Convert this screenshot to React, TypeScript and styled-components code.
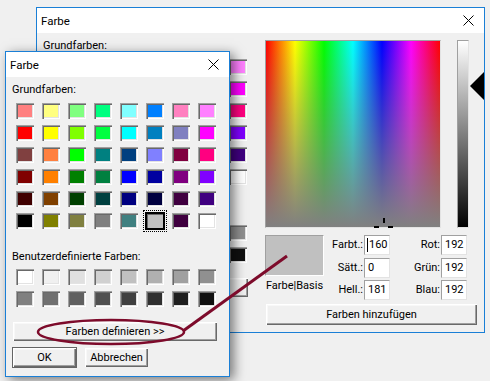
import React from "react"
import styled, { createGlobalStyle } from "styled-components"

const GlobalStyle = createGlobalStyle`
    html, body {
        margin: 0;
        padding: 0;
        background: #f0f0f0;
    }
    body {
        font-family: Roboto, "Liberation Sans", sans-serif;
        font-size: 11px;
        color: #000;
    }
`

const basicColors = [
    "#FF8080", "#FFFF80", "#80FF80", "#00FF80", "#80FFFF", "#0080FF", "#FF80C0", "#FF80FF",
    "#FF0000", "#FFFF00", "#80FF00", "#00FF40", "#00FFFF", "#0080C0", "#8080C0", "#FF00FF",
    "#804040", "#FF8040", "#00FF00", "#008080", "#004080", "#8080FF", "#800040", "#FF0080",
    "#800000", "#FF8000", "#008000", "#008040", "#0000FF", "#0000A0", "#800080", "#8000FF",
    "#400000", "#804000", "#004000", "#004040", "#000080", "#000040", "#400040", "#400080",
    "#000000", "#808000", "#808040", "#808080", "#408080", "#C0C0C0", "#400040", "#FFFFFF",
]
const customColors = [
    "#ffffff", "#f0f0f0", "#e0e0e0", "#d0d0d0", "#c0c0c0", "#b0b0b0", "#a0a0a0", "#909090",
    "#808080", "#707070", "#606060", "#505050", "#404040", "#303030", "#202020", "#101010",
]

const Desktop = styled.div`
    position: relative;
    width: 490px;
    height: 381px;
    overflow: hidden;
    background: #f0f0f0;
`
// dialogs sit on a free desktop, so they are placed by coordinates
const Window = styled.div<{ $left: number; $top: number; $width: number; $shadow?: boolean }>`
    position: absolute;
    left: ${p => p.$left}px;
    top: ${p => p.$top}px;
    width: ${p => p.$width}px;
    height: 326px;
    box-sizing: border-box;
    border: 1px solid #1a7fd6;
    background: #f0f0f0;
    display: flex;
    flex-direction: column;
    box-shadow: ${p => p.$shadow ? "4px 3px 11px rgba(0, 0, 0, 0.5)" : "none"};
`
const TitleBar = styled.div`
    height: 25px;
    flex: none;
    background: #fff;
    display: flex;
    align-items: center;
    justify-content: space-between;
    padding: 0 10px 0 4px;
`
const Title = styled.span`
    font-size: 11.5px;
`
const Body = styled.div`
    display: flex;
    flex-direction: row;
`
const LeftPanel = styled.div`
    width: 228px;
    flex: none;
    box-sizing: border-box;
    padding: 5px 0 0 6px;
    display: flex;
    flex-direction: column;
    align-items: flex-start;
`
const Label = styled.div<{ $gap?: number }>`
    height: 15px;
    line-height: 15px;
    margin-top: ${p => p.$gap ?? 0}px;
`
const SwatchGrid = styled.div<{ $gap: number }>`
    display: grid;
    grid-template-columns: repeat(8, 18px);
    grid-auto-rows: 16px;
    column-gap: 8px;
    row-gap: 6px;
    margin: ${p => p.$gap}px 0 0 4px;
`
const Swatch = styled.div<{ $color: string; $selected?: boolean }>`
    width: 18px;
    height: 16px;
    background: ${p => p.$color};
    box-shadow: ${p => p.$selected
        ? "0 0 0 1px #000, inset 0 0 0 1px #000, inset 2px 2px #696969"
        : "inset 1px 1px #a0a0a0, inset 2px 2px #696969, inset -1px -1px #fff, inset -2px -2px #e3e3e3"};
    outline: ${p => p.$selected ? "1px dotted #000" : "none"};
    outline-offset: 2px;
`
const Button = styled.div<{ $width: number; $height?: number; $default?: boolean; $disabled?: boolean }>`
    width: ${p => p.$width}px;
    height: ${p => p.$height ?? 21}px;
    box-sizing: border-box;
    display: flex;
    align-items: center;
    justify-content: center;
    background: #f0f0f0;
    color: ${p => p.$disabled ? "#a0a0a0" : "#000"};
    border: 1px solid ${p => p.$default ? "#646464" : "transparent"};
    box-shadow: inset 1px 1px #fff, inset -1px -1px #696969, inset -2px -2px #a0a0a0, inset 2px 2px #f8f8f8;
`
const WideButton = styled(Button)`
    margin-top: 14px;
`
const ButtonRow = styled.div`
    display: flex;
    gap: 7px;
    margin-top: 5px;
`
const RightPanel = styled.div`
    display: flex;
    flex-direction: column;
    padding-top: 7px;
`
const SpectrumRow = styled.div`
    display: flex;
    align-items: flex-start;
`
const Spectrum = styled.div`
    position: relative;
    width: 176px;
    height: 188px;
    box-sizing: border-box;
    border: 1px solid;
    border-color: #a0a0a0 #e3e3e3 #e3e3e3 #a0a0a0;
    background:
        linear-gradient(to bottom, rgba(128, 128, 128, 0), #808080),
        linear-gradient(to right, #f00, #ff0, #0f0, #0ff, #00f, #f0f, #f00);
`
const Crosshair = styled.svg`
    position: absolute;
    left: 108px;
    top: 176px;
`
const LumBar = styled.div`
    width: 12px;
    height: 188px;
    margin-left: 16px;
    box-sizing: border-box;
    border: 1px solid;
    border-color: #a0a0a0 #e3e3e3 #e3e3e3 #a0a0a0;
    background: linear-gradient(to bottom, #fff, #000);
`
const Pointer = styled.div`
    width: 14px;
    height: 28px;
    margin: 32px 0 0 1px;
    background: #000;
    clip-path: polygon(0 50%, 100% 0, 100% 100%);
`
const DetailRow = styled.div`
    display: flex;
    margin-top: 7px;
    height: 65px;
`
const PreviewCol = styled.div`
    width: 59px;
    display: flex;
    flex-direction: column;
    align-items: center;
`
const PreviewBox = styled.div<{ $color: string }>`
    width: 59px;
    height: 41px;
    box-sizing: border-box;
    background: ${p => p.$color};
    border: 1px solid;
    border-color: #a0a0a0 #fff #fff #a0a0a0;
`
const Caption = styled.div`
    margin-top: 2px;
    line-height: 15px;
`
const FieldGrid = styled.div`
    display: grid;
    grid-template-columns: 40px 26px 51px 26px;
    grid-auto-rows: 20px;
    row-gap: 2.5px;
`
const FieldLabel = styled.div`
    text-align: right;
    padding-right: 1px;
    line-height: 20px;
`
const Field = styled.div`
    box-sizing: border-box;
    background: #fff;
    border: 1px solid;
    border-color: #a0a0a0 #e3e3e3 #e3e3e3 #a0a0a0;
    padding-left: 3px;
    line-height: 18px;
    display: flex;
    align-items: center;
`
const Caret = styled.span`
    width: 1px;
    height: 14px;
    background: #000;
    margin: 0 1px 0 -1px;
`
const AddButton = styled(Button)`
    margin-top: 3px;
`
const Annotation = styled.svg`
    position: absolute;
    left: 0;
    top: 0;
    pointer-events: none;
`

const CloseIcon = () => (
    <svg width="11" height="11" viewBox="0 0 11 11">
        <path d="M0.5 0.5 L10.5 10.5 M10.5 0.5 L0.5 10.5" stroke="#000" strokeWidth="1" fill="none" />
    </svg>
)

const ColorPanel = ({ expanded }: { expanded?: boolean }) => (
    <LeftPanel>
        <Label>Grundfarben:</Label>
        <SwatchGrid $gap={6}>
            {basicColors.map((c, i) => <Swatch key={i} $color={c} $selected={i === 45} />)}
        </SwatchGrid>
        <Label $gap={20}>Benutzerdefinierte Farben:</Label>
        <SwatchGrid $gap={5}>
            {customColors.map((c, i) => <Swatch key={i} $color={c} />)}
        </SwatchGrid>
        <WideButton $width={206} $disabled={expanded}>Farben definieren &gt;&gt;</WideButton>
        <ButtonRow>
            <Button $width={65} $default>OK</Button>
            <Button $width={65}>Abbrechen</Button>
        </ButtonRow>
    </LeftPanel>
)

const fields = [
    ["Farbt.:", "160", "Rot:", "192"],
    ["Sätt.:", "0", "Grün:", "192"],
    ["Hell.:", "181", "Blau:", "192"],
]

const App = () => {
    return (
        <Desktop>
            <GlobalStyle />
            <Window $left={36} $top={7} $width={449}>
                <TitleBar>
                    <Title>Farbe</Title>
                    <CloseIcon />
                </TitleBar>
                <Body>
                    <ColorPanel expanded />
                    <RightPanel>
                        <SpectrumRow>
                            <Spectrum>
                                <Crosshair width="22" height="12" viewBox="0 0 22 12">
                                    <rect x="9" y="1" width="2" height="5" fill="#000" />
                                    <rect x="0" y="9" width="5" height="2" fill="#000" />
                                    <rect x="14" y="9" width="5" height="2" fill="#000" />
                                </Crosshair>
                            </Spectrum>
                            <LumBar />
                            <Pointer />
                        </SpectrumRow>
                        <DetailRow>
                            <PreviewCol>
                                <PreviewBox $color="#c0c0c0" />
                                <Caption>Farbe|Basis</Caption>
                            </PreviewCol>
                            <FieldGrid>
                                {fields.map((row, i) => (
                                    <React.Fragment key={i}>
                                        <FieldLabel>{row[0]}</FieldLabel>
                                        <Field>{i === 0 && <Caret />}{row[1]}</Field>
                                        <FieldLabel>{row[2]}</FieldLabel>
                                        <Field>{row[3]}</Field>
                                    </React.Fragment>
                                ))}
                            </FieldGrid>
                        </DetailRow>
                        <AddButton $width={213} $height={23}>Farben hinzufügen</AddButton>
                    </RightPanel>
                </Body>
            </Window>

            <Window $left={5} $top={51} $width={225} $shadow>
                <TitleBar>
                    <Title>Farbe</Title>
                    <CloseIcon />
                </TitleBar>
                <Body>
                    <ColorPanel />
                </Body>
            </Window>

            <Annotation width="490" height="381" viewBox="0 0 490 381">
                <ellipse cx="111" cy="332" rx="73" ry="12" fill="none" stroke="#7d0b2b" strokeWidth="2.5" />
                <line x1="183" y1="331" x2="287" y2="256" stroke="#7d0b2b" strokeWidth="3" />
            </Annotation>
        </Desktop>
    )
}

export default App
